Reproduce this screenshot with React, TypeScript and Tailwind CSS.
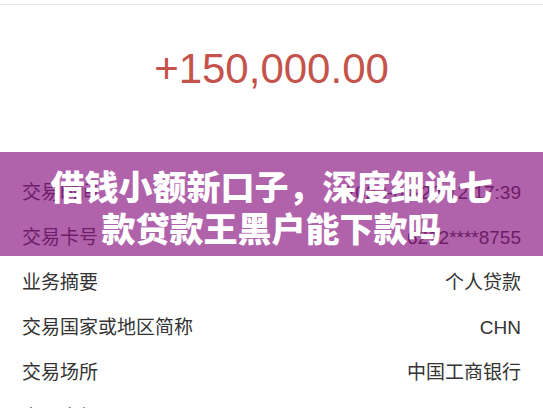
const rows = [
  { label: "交易时间", value: "2023-04-22 12:17:39" },
  { label: "交易卡号", value: "6212****8755" },
  { label: "业务摘要", value: "个人贷款" },
  { label: "交易国家或地区简称", value: "CHN" },
  { label: "交易场所", value: "中国工商银行" },
  { label: "交易金额", value: "150,000.00" },
];

export default function App() {
  return (
    <div className="relative h-[408px] w-full overflow-hidden bg-white font-['Liberation_Sans','Noto_Sans_CJK_SC',sans-serif]">
      <div className="h-[4px]" />
      <div className="border-t border-[#e9e9e9]" />

      <div className="flex h-[166px] justify-center pt-[43px]">
        <span className="text-[42px] leading-none text-[#c4534b]">+150,000.00</span>
      </div>

      <div className="flex flex-col">
        {rows.map((row) => (
          <div key={row.label} className="flex h-[45px] items-center justify-between px-[22px] text-[19px] text-[#333333]">
            <span>{row.label}</span>
            <span>{row.value}</span>
          </div>
        ))}
      </div>

      {/* purple title banner over the list */}
      <div className="absolute left-0 right-0 top-[152px] flex h-[104px] flex-col items-center justify-center bg-[#891582]/[0.67] pt-[6px]">
        <p className="text-center font-['Noto_Sans_CJK_SC',sans-serif] text-[34px] font-black leading-[42px] text-white">
          借钱小额新口子，深度细说七
          <br />
          款贷款王黑户能下款吗
        </p>
      </div>
    </div>
  );
}
